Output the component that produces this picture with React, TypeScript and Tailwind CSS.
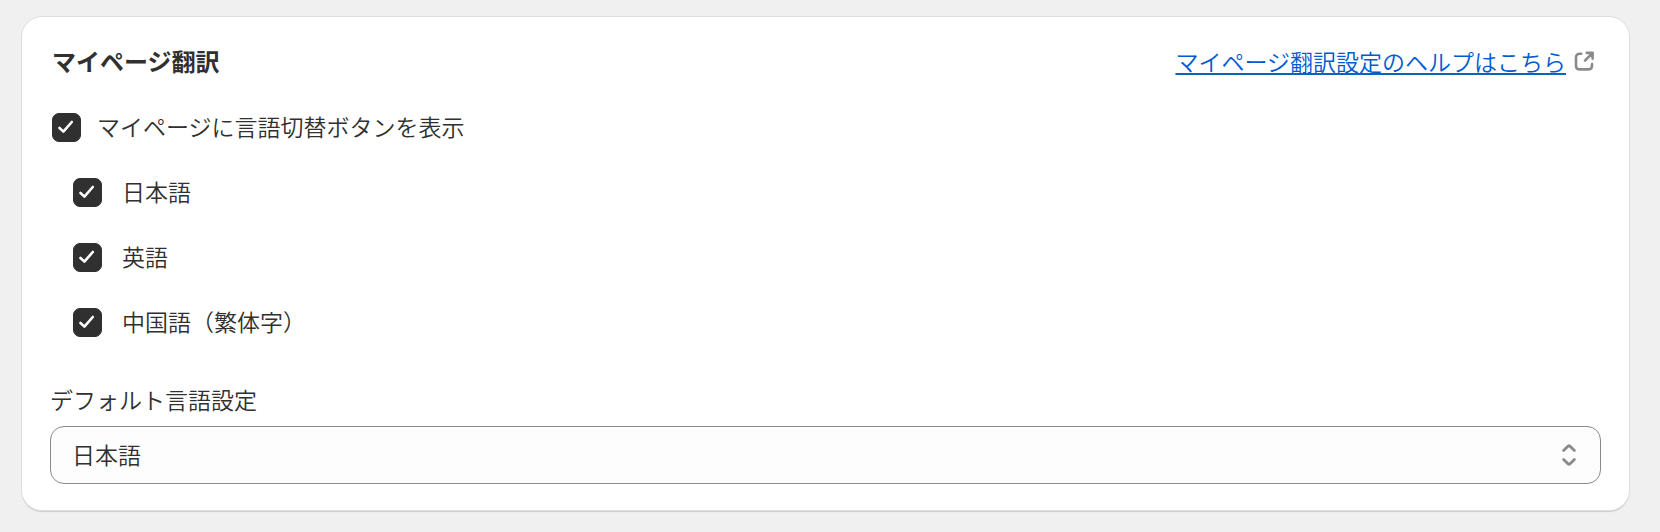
import { useState } from "react";

type CheckboxProps = {
  id: string;
  label: string;
  checked: boolean;
  onChange: (checked: boolean) => void;
  nested?: boolean;
};

function Checkbox({ id, label, checked, onChange, nested = false }: CheckboxProps) {
  return (
    <div className={nested ? "flex h-[29px] items-center gap-5 pl-[21px]" : "flex h-[29px] items-center gap-4"}>
      <span className="grid size-[29px] shrink-0">
        <input
          id={id}
          type="checkbox"
          checked={checked}
          onChange={(event) => onChange(event.target.checked)}
          className="peer col-start-1 row-start-1 size-[29px] cursor-pointer appearance-none rounded-[7px] border border-[#8a8a8a] bg-white checked:border-[#303030] checked:bg-[#303030]"
        />
        <svg
          viewBox="0 0 29 29"
          aria-hidden="true"
          className="pointer-events-none invisible col-start-1 row-start-1 size-[29px] fill-none stroke-white peer-checked:visible"
        >
          <path d="M7.5 15 L11.4 18.6 L19.8 9" strokeWidth="2.6" strokeLinecap="round" strokeLinejoin="round" />
        </svg>
      </span>
      <label htmlFor={id} className="cursor-pointer pb-1">
        {label}
      </label>
    </div>
  );
}

function ExternalIcon() {
  return (
    <svg viewBox="0 0 20 20" aria-hidden="true" className="size-5 shrink-0 fill-none stroke-[#8a8a8a]">
      <path
        d="M7.2 2.7 H6 Q2 2.7 2 6.7 V14.4 Q2 18.4 6 18.4 H14 Q18 18.4 18 14.4 V13"
        strokeWidth="2.6"
        strokeLinecap="round"
      />
      <path d="M12.8 1.9 H18.6 V7.6 M18 2.5 L11 9.6" strokeWidth="2.6" strokeLinecap="round" strokeLinejoin="round" />
    </svg>
  );
}

const languages = [
  { id: "ja", label: "日本語" },
  { id: "en", label: "英語" },
  { id: "zh-tw", label: "中国語（繁体字）" },
];

export default function App() {
  const [enabled, setEnabled] = useState(true);
  const [active, setActive] = useState<Record<string, boolean>>({ ja: true, en: true, "zh-tw": true });

  return (
    <main className="min-h-screen bg-[#f0f0f0] pt-[17px] pr-[31px] pb-5 pl-[22px] font-['Noto_Sans_CJK_JP',sans-serif] text-[23px] leading-8 font-[350] text-[#303030]">
      <section className="rounded-[20px] bg-white px-7 pt-7 pb-[26px] shadow-[0_0_0_1px_#dedede,0_2px_1px_0_#cccccc]">
        <header className="flex items-center justify-between pr-[7px] pl-0.5">
          <h1 className="text-2xl font-bold">マイページ翻訳</h1>
          <a
            href="#help"
            className="flex items-center gap-2 text-[#005bd3]"
          >
            <span className="underline decoration-[#0a64b8] decoration-2 underline-offset-2">マイページ翻訳設定のヘルプはこちら</span>
            <ExternalIcon />
          </a>
        </header>

        <fieldset className="mt-9 flex flex-col gap-9 pl-0.5">
          <Checkbox id="switcher" label="マイページに言語切替ボタンを表示" checked={enabled} onChange={setEnabled} />
          {languages.map(({ id, label }) => (
            <Checkbox
              key={id}
              id={id}
              label={label}
              nested
              checked={active[id]}
              onChange={(checked) => setActive({ ...active, [id]: checked })}
            />
          ))}
        </fieldset>

        <div className="mt-[46px]">
          <label htmlFor="default-language" className="block">
            デフォルト言語設定
          </label>
          <div className="mt-[11px] grid items-center">
            <select
              id="default-language"
              defaultValue="ja"
              className="col-start-1 row-start-1 h-[58px] w-full cursor-pointer appearance-none rounded-[14px] border border-[#8a8a8a] bg-[#fdfdfd] pr-14 pb-0.5 pl-[21px]"
            >
              {languages.map(({ id, label }) => (
                <option key={id} value={id}>
                  {label}
                </option>
              ))}
            </select>
            <svg
              viewBox="0 0 16 24"
              aria-hidden="true"
              className="pointer-events-none col-start-1 row-start-1 mr-6 h-6 w-4 justify-self-end fill-none stroke-[#8a8a8a]"
            >
              <path
                d="M2.6 7.6 L7.2 3 Q8 2.3 8.8 3 L13.4 7.6 M2.6 16.4 L7.2 21 Q8 21.7 8.8 21 L13.4 16.4"
                strokeWidth="2.8"
                strokeLinecap="round"
                strokeLinejoin="round"
              />
            </svg>
          </div>
        </div>
      </section>
    </main>
  );
}
